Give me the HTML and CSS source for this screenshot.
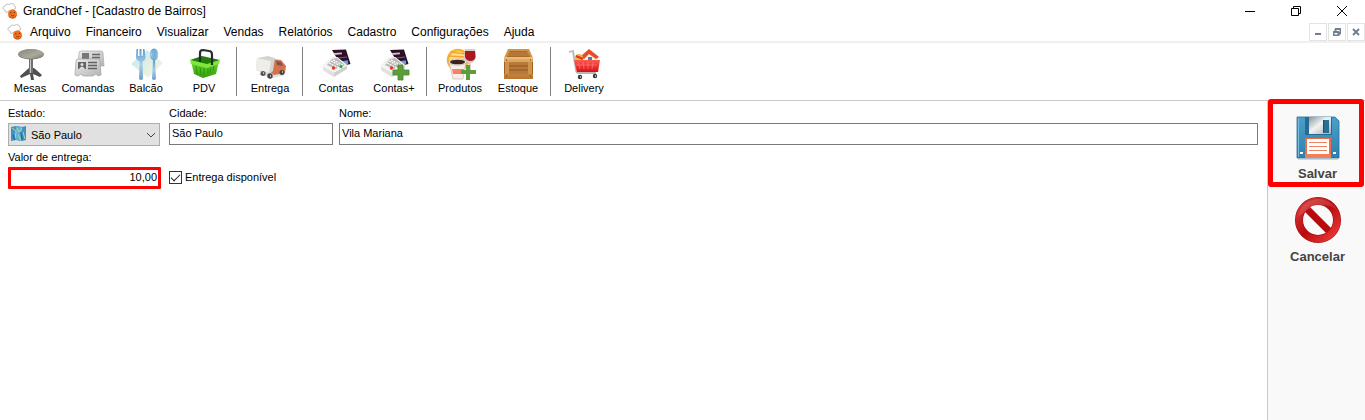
FILE: index.html
```html
<!DOCTYPE html>
<html lang="pt-BR">
<head>
    <meta charset="UTF-8">
    <meta name="viewport" content="width=device-width, initial-scale=1.0">
    <title>GrandChef - [Cadastro de Bairros]</title>
    <link rel="stylesheet" href="styles.css">
</head>
<body>
    <svg class="defs" aria-hidden="true">
        <defs>
            <symbol id="chef" viewBox="0 0 16 16">
                <path d="M4 9.500 2.800 7C.3 6 .5 3.500 3 3.200 3.500 1 6 .6 7.200 1.600 9 0 12.500.5 12.600 3c1.500 1 1.200 3-.6 3.500L6 8.500z" fill="#fff" stroke="#a5a09c" stroke-width=".7"/>
                <circle cx="10.500" cy="11" r="4.500" fill="#f4711c"/>
                <path d="M6.800 13c2 2.800 6 2.600 7.800-.5" fill="none" stroke="#c94a0c"/>
                <path d="M8.200 9.800h1.200M11.800 9.400H13" stroke="#5a260f"/>
                <path d="M9 12.200c1.500 1 3 .7 3.700-.4" fill="none" stroke="#7d2c0b" stroke-width=".7"/>
            </symbol>
            <linearGradient id="gray" x2="1" y2="1"><stop stop-color="#ececec"/><stop offset="1" stop-color="#b4b4b4"/></linearGradient>
            <linearGradient id="table" x2="1" y2="1"><stop stop-color="#85857a"/><stop offset=".6" stop-color="#aaa99b"/><stop offset="1" stop-color="#7b7a70"/></linearGradient>
            <linearGradient id="steel" x2="0" y2="1"><stop stop-color="#5d9bd0"/><stop offset=".5" stop-color="#a5cdea"/><stop offset="1" stop-color="#6a9fc9"/></linearGradient>
            <linearGradient id="napkin" x2="1" y2="1"><stop stop-color="#c2e6f3"/><stop offset="1" stop-color="#fbf7d8"/></linearGradient>
            <linearGradient id="green" x2="0" y2="1"><stop stop-color="#6fdc2b"/><stop offset="1" stop-color="#2f9c0b"/></linearGradient>
            <linearGradient id="wood" x2="0" y2="1"><stop stop-color="#e5b169"/><stop offset="1" stop-color="#b9762f"/></linearGradient>
            <linearGradient id="red" x2="0" y2="1"><stop stop-color="#ff5a4e"/><stop offset="1" stop-color="#d8101b"/></linearGradient>
            <linearGradient id="blue" x2="0" y2="1"><stop stop-color="#4aa0c9"/><stop offset="1" stop-color="#2f7fae"/></linearGradient>
            <linearGradient id="shutter" x2="1" y2="1"><stop stop-color="#8c9295"/><stop offset=".45" stop-color="#f1f3f4"/><stop offset="1" stop-color="#a5abae"/></linearGradient>
            <linearGradient id="ban" x2="1" y2="1"><stop stop-color="#d83a3a"/><stop offset=".5" stop-color="#b90b0f"/><stop offset="1" stop-color="#ee3b3b"/></linearGradient>
            <symbol id="register" viewBox="0 0 32 32">
                <path d="m12 2 14-.5 4.500 14.500-9 2z" fill="#2a1027"/>
                <path d="m14 6 8-.7" stroke="#d9b7cc" stroke-width="1.800"/>
                <path d="m18 10 9-1" stroke="#a04878"/>
                <path d="m22 15 6-1" stroke="#6d9edc" stroke-width="3.500"/>
                <path d="m3 18 8-8 6-1 10 8v4l-13 8L3 22z" fill="#cfcfcd"/>
                <path d="m3 18 8-8 6-1 10 8-13 7z" fill="#f3f3f2"/>
                <path d="m3 18 11 6v5L3 22z" fill="#e2e2e1"/>
                <path d="m3 18 11 6 13-7" fill="none" stroke="#fff" stroke-width=".8"/>
                <path d="m12 11 5-1 8 7-9 4-9-4z" fill="#b9bab8"/>
                <path d="m11 13 10 5M9 15l10 5m-6-8 10 5" stroke="#fff" stroke-width="1.200" stroke-dasharray="2 1"/>
                <circle cx="13.500" cy="20" r="1.700" fill="#ed3526"/>
                <circle cx="21" cy="18.500" r="1.700" fill="#2bb83d"/>
            </symbol>
        </defs>
    </svg>

    <header class="titlebar">
        <svg class="logo"><use href="#chef"/></svg>
        <h1>GrandChef - [Cadastro de Bairros]</h1>
        <div class="window-buttons">
            <button type="button" aria-label="Minimizar"><svg viewBox="0 0 12 12"><path d="M1 6.500h10"/></svg></button>
            <button type="button" aria-label="Restaurar"><svg viewBox="0 0 12 12"><path d="M1.500 3.500h7v7h-7zM3.500 3.500v-2h7v7h-2"/></svg></button>
            <button type="button" aria-label="Fechar"><svg viewBox="0 0 12 12"><path d="m1 1 10 10M11 1 1 11"/></svg></button>
        </div>
    </header>

    <nav class="menubar">
        <svg class="logo"><use href="#chef"/></svg>
        <a href="#">Arquivo</a>
        <a href="#">Financeiro</a>
        <a href="#">Visualizar</a>
        <a href="#">Vendas</a>
        <a href="#">Relatórios</a>
        <a href="#">Cadastro</a>
        <a href="#">Configurações</a>
        <a href="#">Ajuda</a>
        <div class="child-buttons">
            <button type="button" aria-label="Minimizar janela"><svg viewBox="0 0 8 8"><path d="M1 6h6"/></svg></button>
            <button type="button" aria-label="Restaurar janela"><svg viewBox="0 0 8 8"><path d="M0 4h6M.5 4v3.500h5V4M2 1h6M2.500 1v2M7.500 1v4.500H6"/></svg></button>
            <button type="button" aria-label="Fechar janela"><svg viewBox="0 0 8 8"><path d="m1 1 6 6M7 1 1 7"/></svg></button>
        </div>
    </nav>

    <div class="toolbar">
        <button type="button">
            <svg viewBox="0 0 32 32">
                <path d="M15 20 6 28l1 2 9-4 1 6h3l-1-6 7 3 2-2-8-7z" fill="#4f4f50"/>
                <path d="M15 10h4v15h-4z" fill="#6f7173"/>
                <path d="M16 10h1v15h-1z" fill="#c8cbcc"/>
                <ellipse cx="17" cy="6.500" rx="12.700" ry="5" fill="#66665d"/>
                <ellipse cx="17" cy="6" rx="12.700" ry="5" fill="url(#table)"/>
            </svg>
            Mesas
        </button>
        <button type="button">
            <svg viewBox="0 0 32 32">
                <path d="M7 5q0-2 2-2h20q2 0 2 2l1 13H6z" fill="url(#gray)" stroke="#aaa" stroke-width=".7"/>
                <path d="M10 5h7v6h-7z" fill="#777"/><path d="M20 6.500h8M20 9.500h8" stroke="#666" stroke-width="1.500"/>
                <path d="M4 13q0-2 2-2h20q2 0 2 2l1 14-3 1-2-2-3 2H11l-2-2-3 2-3-1z" fill="url(#gray)" stroke="#a0a0a0" stroke-width=".7"/>
                <path d="M6 14h8v7H6z" fill="#636363"/><circle cx="10" cy="16.500" r="1.500" fill="#ddd"/><path d="M7 21q3-5 6 0z" fill="#ddd"/>
                <path d="M16 14.500h9M16 17.500h9M16 20.500h9" stroke="#606060" stroke-width="1.500"/>
            </svg>
            Comandas
        </button>
        <button type="button">
            <svg viewBox="0 0 32 32">
                <path d="m17 2 16 13-15 15L1 16z" fill="url(#napkin)"/>
                <path d="M6.500 1h1.500v7h1.500V1h2v7H13V1h1.500l1 8q0 3-3 4.500L13 31q-2 2-4 0l.7-17.500Q6 12 6 9z" fill="url(#steel)"/>
                <ellipse cx="24" cy="6.500" rx="4.200" ry="6" fill="url(#steel)"/>
                <path d="M23 12h2l1 19q-2 2-4 0z" fill="url(#steel)"/>
                <ellipse cx="24.500" cy="6" rx="2.200" ry="4" fill="#79b0da"/>
            </svg>
            Balcão
        </button>
        <button type="button">
            <svg viewBox="0 0 32 32">
                <path d="m2 12 12-4 18 4-13 5z" fill="#237d09"/>
                <path d="m3 13 16 4 12-4-3 13-13 4-9-4z" fill="url(#green)"/>
                <path d="m8 18 1 8m3-7 1 8m3-7v7m4-7v6m3-7-1 6m4-8-1 6" stroke="#2f920f"/>
                <path d="m2 12 17 4 13-4-1 4-12 4-16-4z" fill="#7fe63a"/>
                <path d="M12 14V5q0-3 3-3l6 1q3 0 3 4v10" fill="none" stroke="#252b2e" stroke-width="2.200"/>
            </svg>
            PDV
        </button>
        <span class="separator"></span>
        <button type="button">
            <svg viewBox="0 0 32 32">
                <path d="m3 26 16 4 12-3-8-3z" fill="#e2e2e2"/>
                <path d="m18 11 9 1 5 6-1 7-11 2-5-4z" fill="#d4714e"/>
                <path d="m22 13 5 1 2 4-6-1z" fill="#73584e"/>
                <path d="m3 10 11-2 7 2-2 13-5 4L2 22z" fill="#d5d3cf"/>
                <path d="m3 10 14 3-2 12L2 22z" fill="#efedea"/>
                <circle cx="9" cy="25.500" r="2.500" fill="#5a5553"/><circle cx="16" cy="28" r="2.700" fill="#484443"/><circle cx="28" cy="24.500" r="2.500" fill="#484443"/>
                <path d="M9 25h1M16 28h1M28 24h1" stroke="#ddd" stroke-width="1.500"/>
            </svg>
            Entrega
        </button>
        <span class="separator"></span>
        <button type="button">
            <svg><use href="#register"/></svg>
            Contas
        </button>
        <button type="button">
            <svg viewBox="0 0 32 32">
                <use href="#register"/>
                <path d="M20 17h5v5h6v5h-6v5h-5v-5h-5v-5h5z" fill="#5d9e3b" stroke="#4c872f" stroke-width=".8"/>
            </svg>
            Contas+
        </button>
        <span class="separator"></span>
        <button type="button">
            <svg viewBox="0 0 32 32">
                <ellipse cx="14" cy="12" rx="10" ry="10" fill="#ffe08a" stroke="#f6b42d" stroke-width="2.500"/>
                <path d="m6 4 16 2M4 8l18 1" stroke="#f1a634" stroke-width="1.500"/>
                <path d="M21 1h10l1 8q-1 5-5 6v8h4v2h-9v-2h3v-8q-5-1-5-6z" fill="#d9cccc"/>
                <path d="M21 3h10l.5 6q-1 4-5 4T21 9z" fill="#ac1822"/>
                <path d="M5 14h17l-3 17H9z" fill="#f7eee9" stroke="#c8aaa0" stroke-width=".6"/>
                <ellipse cx="13.500" cy="14" rx="9" ry="3.200" fill="#f4eee9" stroke="#b7aaa6" stroke-width=".6"/>
                <ellipse cx="13.500" cy="14" rx="7.500" ry="2.300" fill="#3b211c"/>
                <path d="M8 21h12l-.5 5H9z" fill="#f07aa5"/><path d="M9 22h10M10 25h8" stroke="#fa8a38" stroke-width="1.500" stroke-dasharray="2 1"/>
                <path d="M22 17h4v5h6v4h-6v6h-4v-6h-5v-4h5z" fill="#5d9e3b"/>
            </svg>
            Produtos
        </button>
        <button type="button">
            <svg viewBox="0 0 32 32">
                <path d="M6 1h21l4 9H2z" fill="#cf934a"/>
                <path d="M8 3h17l3 6H5z" fill="#a96b2c"/><path d="M7 5h19M6 7h21" stroke="#c4863e"/>
                <path d="M2 9h29v22H2z" fill="#99602a"/>
                <path d="M5 14h23v13H5z" fill="#b87a38"/><path d="M6 18h21M6 22h21" stroke="#8c5422" stroke-width="1.200"/>
                <path d="M2 9h29v5H2zM2 26h29v5H2z" fill="url(#wood)"/><path d="M3 14h4v12H3zM26 14h4v12h-4z" fill="#d0934a"/>
                <path d="M2 10h29" stroke="#f1c98b"/><path d="M4 12h1M28 12h1M4 28h1M28 28h1" stroke="#69401b"/>
            </svg>
            Estoque
        </button>
        <span class="separator"></span>
        <button type="button">
            <svg viewBox="0 0 32 32">
                <path d="m14 7 7-6 9 6-1 11H16z" fill="#f7f0e9"/>
                <path d="m12 9 9-8 10 8-3 2-7-5-5 5z" fill="#e94a29"/>
                <path d="M20 9h4v5h-4z" fill="#527cad"/>
                <circle cx="11" cy="10" r="4" fill="#f4b63b"/><path d="m8 8 7 3" stroke="#d33925" stroke-width="2"/>
                <path d="M1 4l4-1 3 19q0 3 3 3h17" fill="none" stroke="#b7b7b7" stroke-width="1.800"/>
                <path d="M6 12h26l-2 12H9z" fill="url(#red)"/>
                <path d="m10 14 2 7m3-7 1 7m4-7v7m5-7-1 7M8 17h21" stroke="#ff7a70" stroke-width=".7"/>
                <circle cx="12" cy="29" r="2.200" fill="#383838"/><circle cx="27" cy="28" r="2.200" fill="#383838"/>
                <path d="M12 29h1M27 28h1" stroke="#ddd" stroke-width="1.500"/>
            </svg>
            Delivery
        </button>
    </div>

    <div class="workspace">
        <form class="form" id="bairro">
            <div class="field">
                <label for="estado">Estado:</label>
                <div class="combo">
                    <select id="estado"><option>São Paulo</option></select>
                    <svg class="flag" viewBox="0 0 16 16">
                        <path d="M0 1 5 0l6 1 4-1v14l-4 1-6-1-5 1z" fill="#3f91c6"/>
                        <path d="M5 0l6 1v14l-6-1z" fill="#62b1d5"/>
                        <path d="m1 2 4 3-1 9M6 2l2 4 3-4m1 4 2 7M7 9l3 5" fill="none" stroke="#b8d6a2"/>
                        <path d="m2 9 2 5M10 6l1 8" stroke="#266f9f" stroke-width="1.500"/>
                    </svg>
                    <svg class="arrow" viewBox="0 0 10 6"><path d="m1 1 4 4 4-4"/></svg>
                </div>
            </div>
            <div class="field">
                <label for="cidade">Cidade:</label>
                <input type="text" id="cidade" value="São Paulo">
            </div>
            <div class="field">
                <label for="nome">Nome:</label>
                <input type="text" id="nome" value="Vila Mariana">
            </div>
            <div class="field">
                <label for="valor">Valor de entrega:</label>
                <input type="text" id="valor" class="valor" value="10,00">
            </div>
            <label class="check"><input type="checkbox" checked> Entrega disponível</label>
        </form>

        <aside class="actions">
            <button type="submit" form="bairro" class="save">
                <svg viewBox="0 0 48 48">
                    <path d="M4 46h40v1H4z" fill="#d4d4d4"/>
                    <path d="M3 4h38l4 4v37H3z" fill="url(#blue)" stroke="#286f98" stroke-width=".8"/>
                    <path d="M4 5h1v39H4z" fill="#79bddc"/>
                    <path d="M11 4h27v18H11z" fill="#276b92"/>
                    <path d="M15 4h22v17H15z" fill="url(#shutter)"/>
                    <path d="M29 7h6v13h-6z" fill="#286f98"/><path d="M29 7h1v13h-1z" fill="#184e70"/>
                    <path d="M11 25h26v20H11z" fill="#e96d45"/><path d="M13 26h22v15H13z" fill="#fff"/>
                    <path d="M11 41h26v4H11z" fill="#f27f58"/>
                    <path d="M15 29.500h18M15 33.500h18M15 37.500h18" stroke="#ef8260"/>
                    <path d="M6 39h3v2H6zM39 39h3v2h-3z" fill="#fff"/>
                </svg>
                Salvar
            </button>
            <button type="button" class="cancel">
                <svg viewBox="0 0 48 48">
                    <circle cx="24" cy="24" r="19" fill="none" stroke="#a30b0d" stroke-width="8"/>
                    <path d="m11 11 26 26" stroke="#b60c10" stroke-width="7"/>
                    <circle cx="24" cy="24" r="19" fill="none" stroke="url(#ban)" stroke-width="7"/>
                    <path d="M4 21C6 9 15 3 25 3c8 0 15 5 18 11-9-7-23-8-39 7z" fill="#fff" opacity=".13"/>
                </svg>
                Cancelar
            </button>
        </aside>
    </div>
</body>
</html>
```

FILE: styles.css
```css
* {
    box-sizing: border-box;
}

body {
    margin: 0;
    min-height: 100vh;
    display: flex;
    flex-direction: column;
    background: white;
    color: black;
    font-family: "Liberation Sans", Arial, sans-serif;
    font-size: 11px;
}

button, input, select {
    font: inherit;
    color: inherit;
}

button {
    padding: 0;
    border: none;
    background: none;
}

svg {
    display: block;
    flex: none;
}

.defs {
    position: absolute;
    width: 0;
    height: 0;
}

.logo {
    width: 16px;
    height: 16px;
}

/* window title */
.titlebar {
    display: flex;
    align-items: center;
    height: 22px;
    padding-left: 2px;
}

.titlebar h1 {
    margin: 0 0 0 5px;
    font-size: 12px;
    font-weight: normal;
}

.window-buttons {
    display: flex;
    margin-left: auto;
}

.window-buttons button {
    display: flex;
    justify-content: center;
    align-items: center;
    width: 46px;
    height: 20px;
}

.window-buttons svg {
    width: 12px;
    height: 12px;
    fill: none;
    stroke: black;
}

/* menu */
.menubar {
    display: flex;
    align-items: center;
    height: 21px;
    padding-left: 7px;
    border-bottom: 2px solid #f0f0f0;
    font-size: 12px;
}

.menubar a {
    padding: 0 8px 0 7px;
    color: black;
    text-decoration: none;
}

.child-buttons {
    display: flex;
    gap: 1px;
    margin-left: auto;
}

.child-buttons button {
    display: flex;
    justify-content: center;
    align-items: center;
    width: 18px;
    height: 18px;
    border: 1px solid #e3e3e3;
}

.child-buttons svg {
    width: 8px;
    height: 8px;
    fill: none;
    stroke: #708090;
    stroke-width: 2px;
}

/* toolbar */
.toolbar {
    display: flex;
    height: 58px;
    padding: 4px 0 4px 1px;
    border-bottom: 1px solid #c8c8c8;
}

.toolbar button {
    display: flex;
    flex-direction: column;
    align-items: center;
    gap: 2px;
    width: 58px;
    padding-top: 1px;
    white-space: nowrap;
}

.toolbar svg {
    width: 32px;
    height: 32px;
    overflow: visible;
}

.separator {
    width: 1px;
    margin: 0 4px 0 3px;
    background: #808080;
}

/* form */
.workspace {
    flex: 1;
    display: flex;
}

.form {
    flex: 1;
    display: grid;
    grid-template-columns: 155px 164px 1fr;
    align-content: start;
    column-gap: 6px;
    row-gap: 4px;
    padding: 5px 9px 8px 8px;
}

.field {
    display: flex;
    flex-direction: column;
    gap: 3px;
}

.field label {
    line-height: 14px;
}

.field input {
    width: 100%;
    height: 22px;
    padding: 0 2px 2px;
    border: 1px solid #7a7a7a;
    background: white;
}

.combo {
    position: relative;
    width: 152px;
}

.combo select {
    display: block;
    width: 100%;
    height: 23px;
    padding: 0 18px 0 22px;
    appearance: none;
    border: 1px solid #adadad;
    border-radius: 0;
    background: #e1e1e1;
}

.flag {
    position: absolute;
    top: 3px;
    left: 3px;
    width: 16px;
    height: 16px;
}

.arrow {
    position: absolute;
    top: 9px;
    right: 4px;
    width: 10px;
    height: 6px;
    fill: none;
    stroke: #444;
    pointer-events: none;
}

.field .valor {
    width: 153px;
    border: 3px solid #f00;
    border-radius: 1px;
    padding: 0 1px 2px;
    text-align: right;
}

.check {
    display: flex;
    align-items: center;
    align-self: end;
    gap: 3px;
    height: 24px;
}

.check input {
    display: grid;
    place-items: center;
    width: 13px;
    height: 13px;
    margin: 0;
    appearance: none;
    border: 1px solid #333;
}

.check input:checked::before {
    content: "";
    width: 8px;
    height: 4px;
    margin-bottom: 2px;
    border: solid #222;
    border-width: 0 0 1px 1px;
    transform: rotate(-45deg);
}

/* side buttons */
.actions {
    display: flex;
    flex-direction: column;
    width: 98px;
    padding-right: 1px;
    border-left: 1px solid #c8c8c8;
    background: #f9f9f9;
    color: #444;
    font-size: 13px;
    font-weight: bold;
}

.actions button {
    display: flex;
    flex-direction: column;
    align-items: center;
    gap: 5px;
    padding: 9px 0 2px 3px;
}

.actions svg {
    width: 48px;
    height: 48px;
}

.actions .save {
    height: 88px;
    margin-top: -2px;
    border: 5px solid #f00;
    border-radius: 3px;
}
```
